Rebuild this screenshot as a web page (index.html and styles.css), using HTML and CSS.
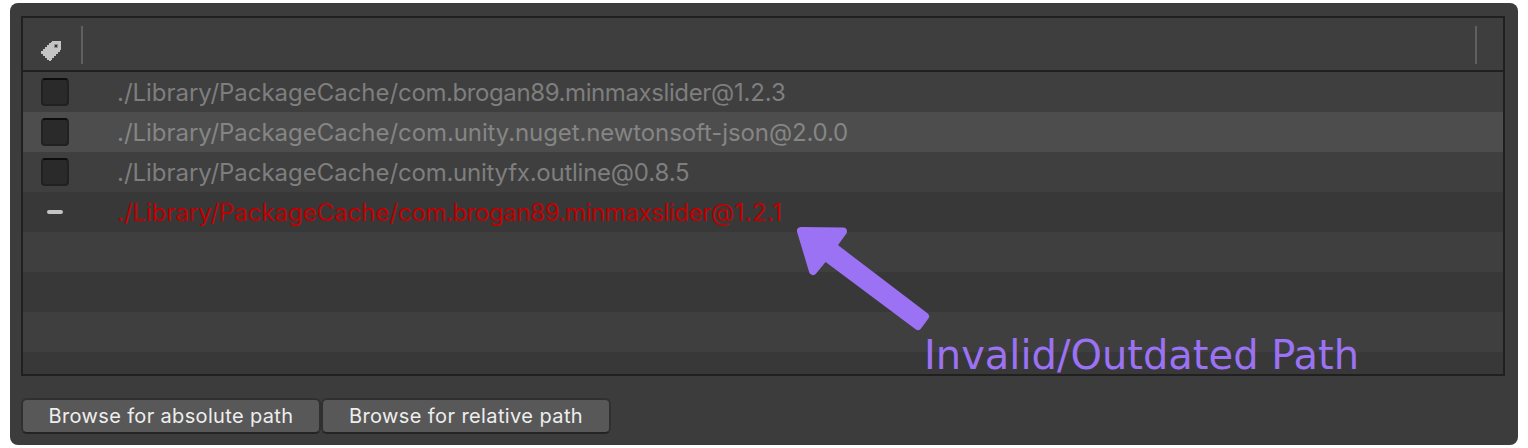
FILE: index.html
```html
<!DOCTYPE html>
<html lang="en">
<head>
<meta charset="utf-8">
<title>Package paths</title>
<link rel="stylesheet" href="styles.css">
</head>
<body>
<main class="panel">
  <section class="table">
    <header class="head">
      <svg class="tag" width="20" height="20" viewBox="0 0 20 20" shape-rendering="crispEdges"><path fill="#c4c4c4" fill-rule="evenodd" d="M11 0H20V9H19V11H17V13H15V15H13V17H11V19H10V20H8V19H6V17H4V15H2V13H0V10H2V8H4V6H6V4H8V2H10V1H11Z"/><path fill="#909090" d="M13 3H17V7H13Z"/><path fill="#303030" d="M14 4H16V6H14Z"/></svg>
      <i class="divider"></i><i class="divider last"></i>
    </header>
    <div class="rows">
      <div class="row"><span class="cell"><i class="check"></i></span><span class="path">./Library/PackageCache/<span class="slider">com.brogan89.minmaxslider</span><span class="version">@1.2.3</span></span></div>
      <div class="row hover"><span class="cell"><i class="check"></i></span><span class="path">./Library/PackageCache/<span class="json">com.unity.nuget.newtonsoft-json</span><span class="version">@2.0.0</span></span></div>
      <div class="row"><span class="cell"><i class="check"></i></span><span class="path">./Library/PackageCache/<span class="outline">com.unityfx.outline</span><span class="version">@0.8.5</span></span></div>
      <div class="row dark"><span class="cell"><i class="dash"></i></span><span class="path invalid">./Library/PackageCache/<span class="slider">com.brogan89.minmaxslider</span><span class="version last-version">@1.2.1</span></span></div>
      <div class="row"></div>
      <div class="row dark"></div>
      <div class="row"></div>
      <div class="row dark"></div>
    </div>
  </section>
  <footer class="actions">
    <button class="btn absolute-path">Browse for absolute path</button>
    <button class="btn relative-path">Browse for relative path</button>
  </footer>
  <svg class="arrow" width="140" height="110" viewBox="795 223 140 110"><path fill="#9c72f4" stroke="#9c72f4" stroke-width="8" stroke-linejoin="round" d="M801 231L843 231.5L832.5 246L925 316.500L918 326L825 256.500L813 271Z"/></svg>
  <span class="note">Invalid/Outdated Path</span>
</main>
</body>
</html>
```
FILE: styles.css
```css
* { box-sizing: border-box; }
body { margin: 0; background: #fff; font-family: Inter, sans-serif; }
.panel { position: relative; width: 1508px; height: 442px; margin: 3px 10px 0; padding: 13px 13px 0 11px; border-radius: 8px; background: #3c3c3c; }
.table { height: 360px; border: 2px solid #202020; overflow: hidden; }
.head { display: flex; height: 54px; padding: 8px 26px 0 18px; border-bottom: 2px solid #202020; background: #3e3e3e; }
.tag { margin-top: 15px; }
.divider { width: 2px; height: 38px; margin-left: 20px; background: #606060; }
.divider.last { margin-left: auto; }
.row { display: flex; align-items: center; height: 40px; background: #3f3f3f; }
.row.dark { background: #383838; }
.row.hover { background: #4d4d4d; }
.cell { display: flex; justify-content: center; width: 64px; margin-right: 30px; }
.check { width: 28px; height: 28px; border: 2px solid #212121; border-top-color: #0d0d0d; border-radius: 4px; background: #2a2a2a; }
.dash { width: 16px; height: 4px; border-radius: 2px; background: #c4c4c4; }
.path { padding-top: 2px; color: #7e7e7e; font-size: 24px; line-height: 38px; letter-spacing: -0.03px; white-space: nowrap; }
.slider { letter-spacing: -0.4px; }
.json { letter-spacing: -0.1px; }
.outline { letter-spacing: -0.25px; }
.version { letter-spacing: -0.15px; }
.last-version { letter-spacing: 0.4px; }
.hover .path { color: #858585; }
.path.invalid { color: #c00000; }
.actions { display: flex; margin-top: 22px; }
.btn { height: 36px; padding: 0; border: 2px solid #303030; border-bottom-color: #242424; border-radius: 6px; background: #585858; color: #eee; font: 20px/32px Inter, sans-serif; letter-spacing: 0.35px; white-space: nowrap; }
.absolute-path { width: 300px; }
.relative-path { width: 290px; letter-spacing: 0.4px; }
.arrow { position: absolute; left: 785px; top: 220px; }
.note { position: absolute; left: 914px; top: 327px; color: #9c72f4; font: 40px/50px "DejaVu Sans", sans-serif; white-space: nowrap; }
```
